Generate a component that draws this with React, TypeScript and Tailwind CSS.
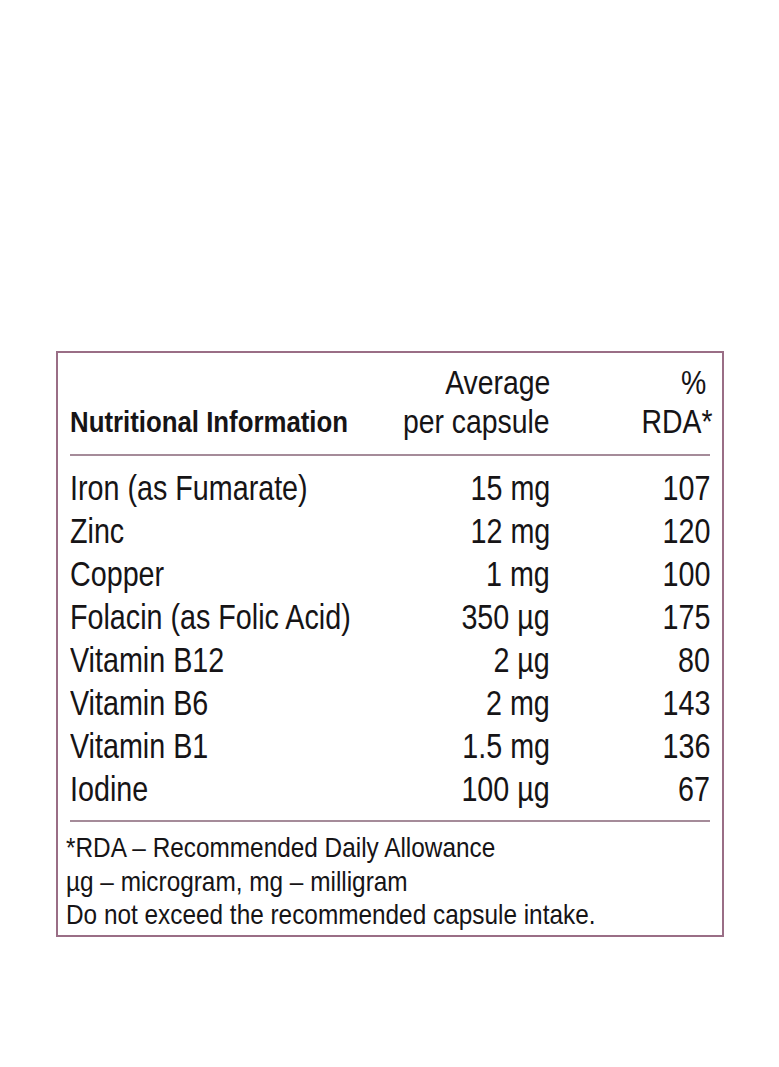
const rows: [string, string, string][] = [
  ["Iron (as Fumarate)", "15 mg", "107"],
  ["Zinc", "12 mg", "120"],
  ["Copper", "1 mg", "100"],
  ["Folacin (as Folic Acid)", "350 µg", "175"],
  ["Vitamin B12", "2 µg", "80"],
  ["Vitamin B6", "2 mg", "143"],
  ["Vitamin B1", "1.5 mg", "136"],
  ["Iodine", "100 µg", "67"],
];

// Condensed look: scale Liberation Sans horizontally, anchored on the aligned edge
function Narrow({ children, right = false }: { children: React.ReactNode; right?: boolean }) {
  return (
    <span
      className={
        right
          ? "inline-block whitespace-nowrap origin-right scale-x-[0.82]"
          : "inline-block whitespace-nowrap origin-left scale-x-[0.82]"
      }
    >
      {children}
    </span>
  );
}

function HeadText({ children }: { children: React.ReactNode }) {
  return (
    <span className="inline-block whitespace-nowrap origin-right scale-x-[0.86]">
      {children}
    </span>
  );
}

export default function App() {
  return (
    <div className="min-h-[1067px] w-[779px] bg-white pt-[351px] pl-[56px] font-['Liberation_Sans',Arial,sans-serif] text-[#161416]">
      <div className="w-[668px] h-[586px] border-2 border-[#9a6e86] px-[12px] pt-[10px]">
        {/* Header */}
        <div className="grid grid-cols-[280px_200px_160px] items-end pb-[13px] border-b-2 border-[#a58b99]">
          <div className="text-[30px] font-bold leading-[38px]">
            <span className="inline-block whitespace-nowrap origin-left scale-x-[0.86]">
              Nutritional Information
            </span>
          </div>
          <div className="text-right text-[33px] leading-[39px]">
            <div><HeadText>Average</HeadText></div>
            <div><HeadText>per capsule</HeadText></div>
          </div>
          <div className="text-right text-[33px] leading-[39px]">
            <div className="pr-[4px]"><HeadText>%</HeadText></div>
            <div className="-mr-[3px]"><HeadText>RDA*</HeadText></div>
          </div>
        </div>

        {/* Nutrients */}
        <div className="pt-[10px] pb-[10px] border-b-2 border-[#a58b99]">
          {rows.map(([name, amount, rda]) => (
            <div
              key={name}
              className="grid grid-cols-[280px_200px_160px] text-[35px] leading-[43px]"
            >
              <div><Narrow>{name}</Narrow></div>
              <div className="text-right"><Narrow right>{amount}</Narrow></div>
              <div className="text-right"><Narrow right>{rda}</Narrow></div>
            </div>
          ))}
        </div>

        {/* Footnotes */}
        <div className="pt-[9px] -ml-[4px] text-[28px] leading-[33.5px]">
          <p><span className="inline-block whitespace-nowrap origin-left scale-x-[0.87]">*RDA – Recommended Daily Allowance</span></p>
          <p><span className="inline-block whitespace-nowrap origin-left scale-x-[0.87]">µg – microgram, mg – milligram</span></p>
          <p><span className="inline-block whitespace-nowrap origin-left scale-x-[0.87]">Do not exceed the recommended capsule intake.</span></p>
        </div>
      </div>
    </div>
  );
}
